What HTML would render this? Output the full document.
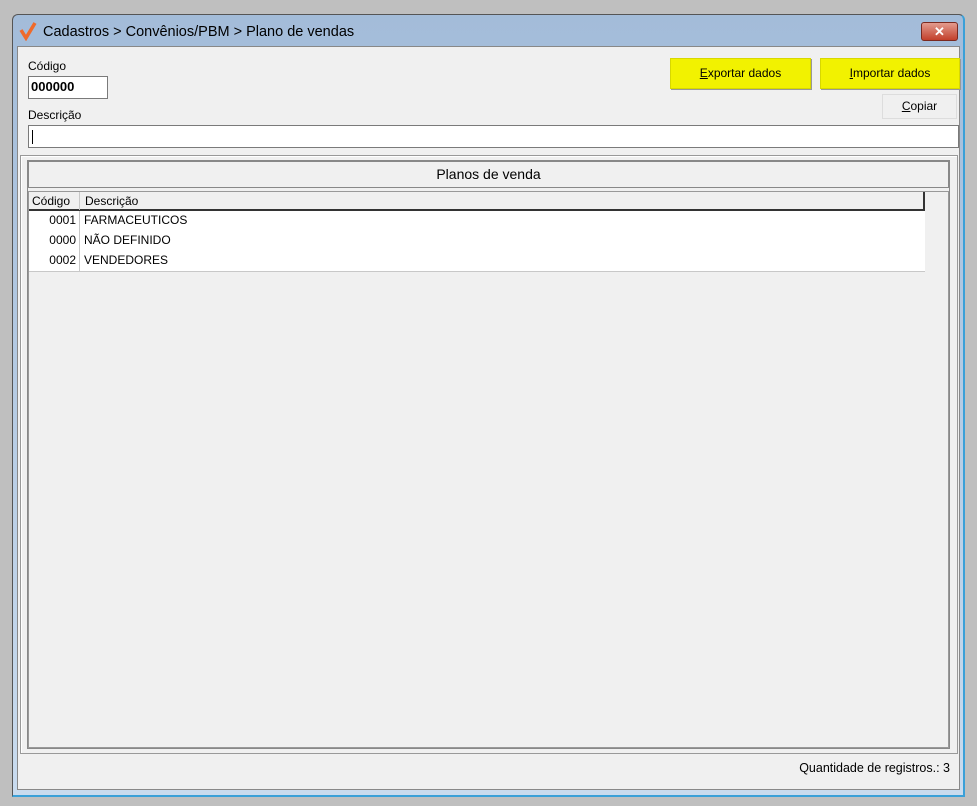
<!DOCTYPE html>
<html><head><meta charset="utf-8"><style>
body{margin:0;width:977px;height:806px;background:#bfbfbf;position:relative;overflow:hidden;font-family:"Liberation Sans",sans-serif;font-size:12px;color:#000}
.a{position:absolute;box-sizing:border-box}
.btn{background:#f2f200;border:1px solid #d8d800;box-shadow:1px 1px 0 #999;text-align:center;line-height:29px;font-size:12px}
.row{position:absolute;left:29px;width:896px;height:20px;background:#fff;border-bottom:1px solid #c8c8c8;line-height:19px}
.c1{position:absolute;left:0;width:51px;text-align:right;border-right:1px solid #c8c8c8;height:20px;padding-right:3px;box-sizing:border-box}
.c2{position:absolute;left:55px}
</style></head><body>
<div class="a" style="left:12px;top:14px;width:953px;height:783px;background:linear-gradient(#a3bcd9,#c9dbee);border:1px solid #555;border-radius:6px 6px 0 0;border-right:2px solid #3aa0d8;border-bottom:2px solid #3aa0d8"></div>
<svg class="a" style="left:18px;top:21px" width="20" height="20"><path d="M3 9 L8 17 L17 2" stroke="#f06a2a" stroke-width="3.5" fill="none"/></svg>
<div class="a" style="left:43px;top:24px;font-size:14.5px">Cadastros &gt; Convênios/PBM &gt; Plano de vendas</div>
<div class="a" style="left:921px;top:22px;width:37px;height:19px;background:linear-gradient(#e39b8e,#c2402b);border:1px solid #7a2a20;border-radius:3px;color:#fff;font-weight:bold;text-align:center;line-height:17px;font-size:13px">✕</div>
<div class="a" style="left:17px;top:46px;width:943px;height:744px;background:#f0f0f0;border:1px solid #888"></div>
<div class="a" style="left:28px;top:59px">Código</div>
<div class="a" style="left:28px;top:76px;width:80px;height:23px;background:#fff;border:1px solid #7a7a7a;font-weight:bold;font-size:13px;line-height:20px;padding-left:2px">000000</div>
<div class="a" style="left:28px;top:108px">Descrição</div>
<div class="a" style="left:28px;top:125px;width:931px;height:23px;background:#fff;border:1px solid #7a7a7a"><div class="a" style="left:3px;top:4px;width:1px;height:14px;background:#000"></div></div>
<div class="a btn" style="left:670px;top:58px;width:141px;height:31px"><u>E</u>xportar dados</div>
<div class="a btn" style="left:820px;top:58px;width:140px;height:31px"><u>I</u>mportar dados</div>
<div class="a" style="left:882px;top:94px;width:75px;height:25px;background:#f0f0f0;border:1px solid #ddd;text-align:center;line-height:23px"><u>C</u>opiar</div>
<div class="a" style="left:20px;top:155px;width:938px;height:599px;border:1px solid #999;box-shadow:inset 1px 1px 0 #fff"></div>
<div class="a" style="left:27px;top:160px;width:923px;height:589px;border:1px solid #888"></div>
<div class="a" style="left:28px;top:161px;width:921px;height:27px;border:1px solid #888;text-align:center;line-height:25px;font-size:14px">Planos de venda</div>
<div class="a" style="left:28px;top:191px;width:921px;height:557px;border:1px solid #999"></div>
<div class="a" style="left:29px;top:192px;width:896px;height:19px;border-bottom:2px solid #333;border-right:2px solid #333;line-height:18px"><div class="c1" style="height:18px;text-align:left;padding-left:3px">Código</div><div class="c2" style="left:56px">Descrição</div></div>
<div class="row" style="top:211px"><div class="c1">0001</div><div class="c2">FARMACEUTICOS</div></div>
<div class="row" style="top:231px"><div class="c1">0000</div><div class="c2">NÃO DEFINIDO</div></div>
<div class="row" style="top:251px"><div class="c1">0002</div><div class="c2">VENDEDORES</div></div>
<div class="a" style="right:27px;top:761px;font-size:12.5px">Quantidade de registros.: 3</div>
</body></html>
